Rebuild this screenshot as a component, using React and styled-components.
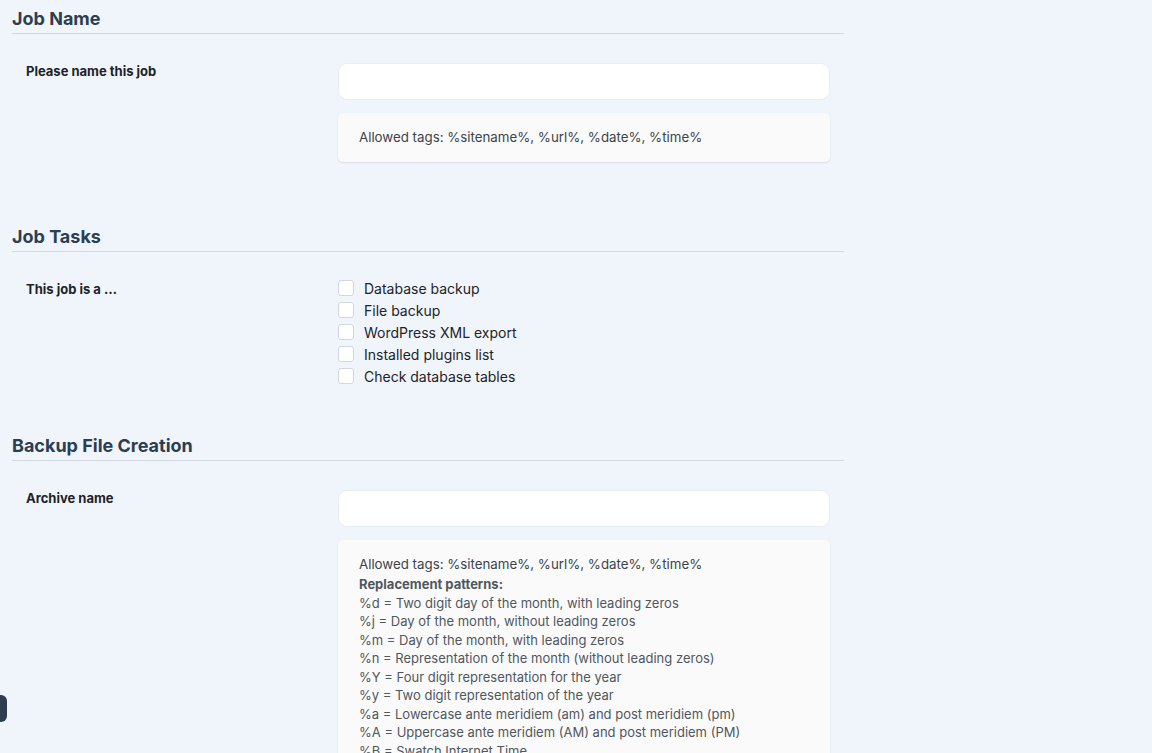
import React from "react";
import styled, { createGlobalStyle } from "styled-components";

const GlobalStyle = createGlobalStyle`
  html, body {
    margin: 0;
    padding: 0;
    background: #f0f5fc;
    font-family: Inter, "Noto Sans", sans-serif;
    color: #1d2327;
  }
`;

const Page = styled.div`
  width: 832px;
  padding: 6px 0 40px 12px;
`;

const Section = styled.section`
  margin-bottom: 46px;
`;

const Title = styled.h3`
  margin: 0;
  padding: 1px 0 2px;
  font-size: 18px;
  line-height: 24px;
  font-weight: 700;
  color: #2c3e50;
  border-bottom: 1px solid #d3d9e1;
`;

const Rows = styled.div`
  padding-top: 29px;
`;

const Row = styled.div`
  display: flex;
  align-items: flex-start;
`;

const Label = styled.div`
  width: 312px;
  padding-left: 14px;
  font-size: 13px;
  line-height: 16px;
  font-weight: 700;
  color: #1d2327;
`;

const Field = styled.div`
  width: 492px;
  display: flex;
  flex-direction: column;
`;

const TextInput = styled.input`
  box-sizing: border-box;
  width: 492px;
  height: 37px;
  border: 1px solid #e8edf3;
  border-radius: 9px;
  background: #fff;
  font-family: inherit;
  font-size: 14px;
  padding: 0 12px;
  outline: none;
`;

const Help = styled.div`
  margin-top: 13px;
  margin-bottom: 16px;
  padding: 14px 20px 14px 21px;
  background: #fafafa;
  border-radius: 5px;
  box-shadow: 0 1px 2px rgba(30, 40, 60, 0.12);
  color: #3c434a;
`;

const Tags = styled.div`
  font-size: 13.3px;
  line-height: 21px;
  height: 21px;
`;

const Patterns = styled.div`
  font-size: 13px;
  line-height: 18.5px;
  color: #50575e;
`;

const PatternsTitle = styled.div`
  font-weight: 700;
  color: #50575e;
`;

const CheckList = styled.div`
  margin-top: -4px;
  display: flex;
  flex-direction: column;
`;

const CheckRow = styled.label`
  display: flex;
  align-items: center;
  height: 22px;
  font-size: 14px;
  color: #1d2327;
`;

const Box = styled.span`
  box-sizing: border-box;
  width: 16px;
  height: 16px;
  margin-right: 10px;
  border: 1px solid #d2d7de;
  border-radius: 3px;
  background: #fff;
`;

const SideTab = styled.div`
  position: fixed;
  left: 0;
  top: 695px;
  width: 7px;
  height: 27px;
  background: #2c3e50;
  border-radius: 0 6px 6px 0;
`;

const tasks = [
  "Database backup",
  "File backup",
  "WordPress XML export",
  "Installed plugins list",
  "Check database tables",
];

const patterns = [
  "%d = Two digit day of the month, with leading zeros",
  "%j = Day of the month, without leading zeros",
  "%m = Day of the month, with leading zeros",
  "%n = Representation of the month (without leading zeros)",
  "%Y = Four digit representation for the year",
  "%y = Two digit representation of the year",
  "%a = Lowercase ante meridiem (am) and post meridiem (pm)",
  "%A = Uppercase ante meridiem (AM) and post meridiem (PM)",
  "%B = Swatch Internet Time",
  "%g = Hour in 12-hour format, without leading zeros",
  "%G = Hour in 24-hour format, without leading zeros",
  "%h = Hour in 12-hour format, with leading zeros",
  "%H = Hour in 24-hour format, with leading zeros",
  "%i = Two digit representation of the minute",
  "%s = Two digit representation of the second",
];

const TAGS = "Allowed tags: %sitename%, %url%, %date%, %time%";

export default function App() {
  return (
    <>
      <GlobalStyle />
      <Page>
        <Section>
          <Title>Job Name</Title>
          <Rows>
            <Row>
              <Label>Please name this job</Label>
              <Field>
                <TextInput type="text" />
                <Help>
                  <Tags>{TAGS}</Tags>
                </Help>
              </Field>
            </Row>
          </Rows>
        </Section>

        <Section>
          <Title>Job Tasks</Title>
          <Rows>
            <Row>
              <Label>This job is a …</Label>
              <CheckList>
                {tasks.map((t) => (
                  <CheckRow key={t}>
                    <Box />
                    {t}
                  </CheckRow>
                ))}
              </CheckList>
            </Row>
          </Rows>
        </Section>

        <Section>
          <Title>Backup File Creation</Title>
          <Rows>
            <Row>
              <Label>Archive name</Label>
              <Field>
                <TextInput type="text" />
                <Help>
                  <Tags>{TAGS}</Tags>
                  <Patterns>
                    <PatternsTitle>Replacement patterns:</PatternsTitle>
                    {patterns.map((p) => (
                      <div key={p}>{p}</div>
                    ))}
                  </Patterns>
                </Help>
              </Field>
            </Row>
          </Rows>
        </Section>
      </Page>
      <SideTab />
    </>
  );
}
